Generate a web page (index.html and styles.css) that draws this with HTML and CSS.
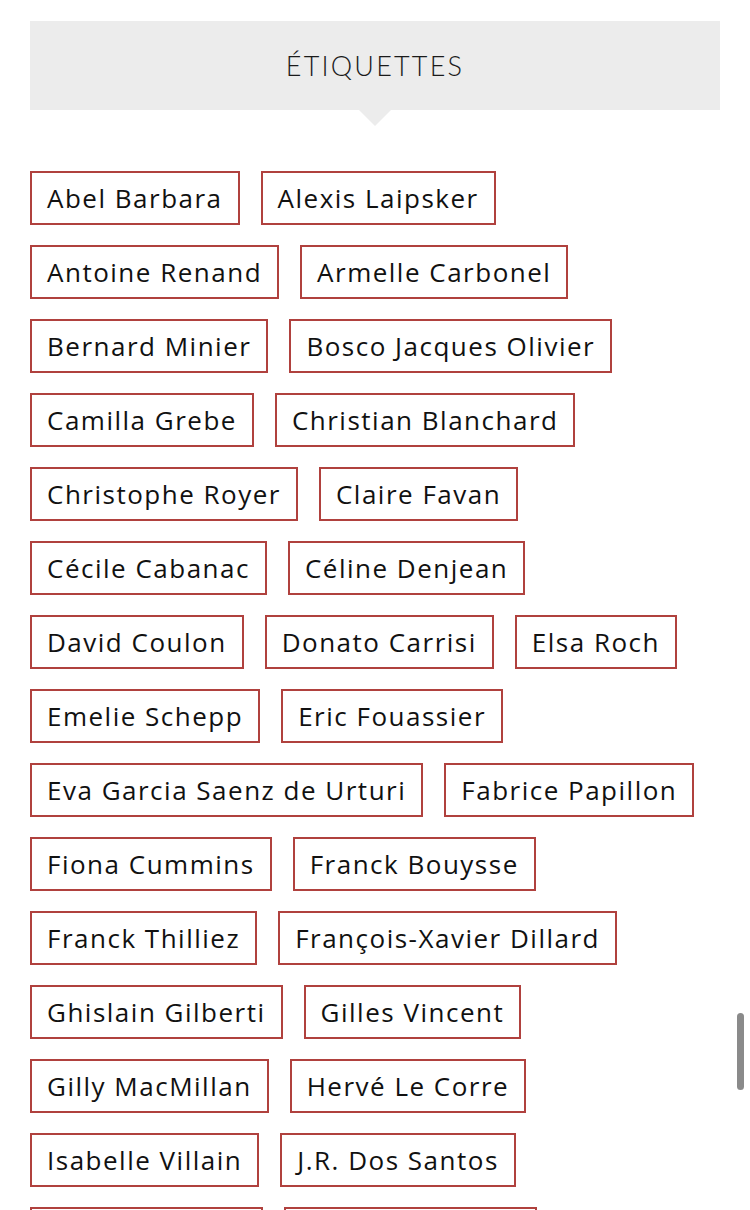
FILE: index.html
```html
<!DOCTYPE html>
<html lang="fr">
<head>
<meta charset="utf-8">
<title>Étiquettes</title>
<link rel="stylesheet" href="styles.css">
</head>
<body>
<section class="widget">
  <div class="widget-head">
    <h2 class="widget-title">ÉTIQUETTES</h2>
  </div>
  <div class="tags">
    <a class="tag" href="#">Abel Barbara</a>
    <a class="tag" href="#">Alexis Laipsker</a>
    <a class="tag" href="#">Antoine Renand</a>
    <a class="tag" href="#">Armelle Carbonel</a>
    <a class="tag" href="#">Bernard Minier</a>
    <a class="tag" href="#">Bosco Jacques Olivier</a>
    <a class="tag" href="#">Camilla Grebe</a>
    <a class="tag" href="#">Christian Blanchard</a>
    <a class="tag" href="#">Christophe Royer</a>
    <a class="tag" href="#">Claire Favan</a>
    <a class="tag" href="#">Cécile Cabanac</a>
    <a class="tag" href="#">Céline Denjean</a>
    <a class="tag" href="#">David Coulon</a>
    <a class="tag" href="#">Donato Carrisi</a>
    <a class="tag" href="#">Elsa Roch</a>
    <a class="tag" href="#">Emelie Schepp</a>
    <a class="tag" href="#">Eric Fouassier</a>
    <a class="tag" href="#">Eva Garcia Saenz de Urturi</a>
    <a class="tag" href="#">Fabrice Papillon</a>
    <a class="tag" href="#">Fiona Cummins</a>
    <a class="tag" href="#">Franck Bouysse</a>
    <a class="tag" href="#">Franck Thilliez</a>
    <a class="tag" href="#">François-Xavier Dillard</a>
    <a class="tag" href="#">Ghislain Gilberti</a>
    <a class="tag" href="#">Gilles Vincent</a>
    <a class="tag" href="#">Gilly MacMillan</a>
    <a class="tag" href="#">Hervé Le Corre</a>
    <a class="tag" href="#">Isabelle Villain</a>
    <a class="tag" href="#">J.R. Dos Santos</a>
    <a class="tag" href="#">Jacques Expert</a>
    <a class="tag" href="#">Jacques Saussey</a>
  </div>
</section>
<div class="scroll-thumb"></div>
</body>
</html>
```

FILE: styles.css
```css
html, body {
  margin: 0;
  padding: 0;
  background: #ffffff;
}

body {
  font-family: "Open Sans", "Liberation Sans", sans-serif;
  color: #111111;
  overflow: hidden;
}

.widget {
  padding: 21px 30px 0 30px;
}

.widget-head {
  position: relative;
  background: #ececec;
  height: 89px;
  display: flex;
  align-items: center;
  justify-content: center;
}

.widget-head::after {
  content: "";
  position: absolute;
  left: 50%;
  bottom: -16px;
  margin-left: -16px;
  border-left: 16px solid transparent;
  border-right: 16px solid transparent;
  border-top: 16px solid #ececec;
}

.widget-title {
  margin: 0;
  font-family: "Lato", "Open Sans", sans-serif;
  font-weight: 300;
  font-size: 27px;
  letter-spacing: 2.2px;
  color: #1a1a1a;
}

.tags {
  display: flex;
  flex-wrap: wrap;
  column-gap: 21px;
  row-gap: 20px;
  margin-top: 61px;
}

.tag {
  display: flex;
  align-items: center;
  height: 54px;
  box-sizing: border-box;
  padding: 0 15px 0 15px;
  border: 2px solid #b0413e;
  color: #111111;
  text-decoration: none;
  font-size: 26px;
  letter-spacing: 1.5px;
  white-space: nowrap;
}

.scroll-thumb {
  position: fixed;
  right: 6px;
  top: 1013px;
  width: 7px;
  height: 77px;
  border-radius: 4px;
  background: #8a8a8a;
}
```
